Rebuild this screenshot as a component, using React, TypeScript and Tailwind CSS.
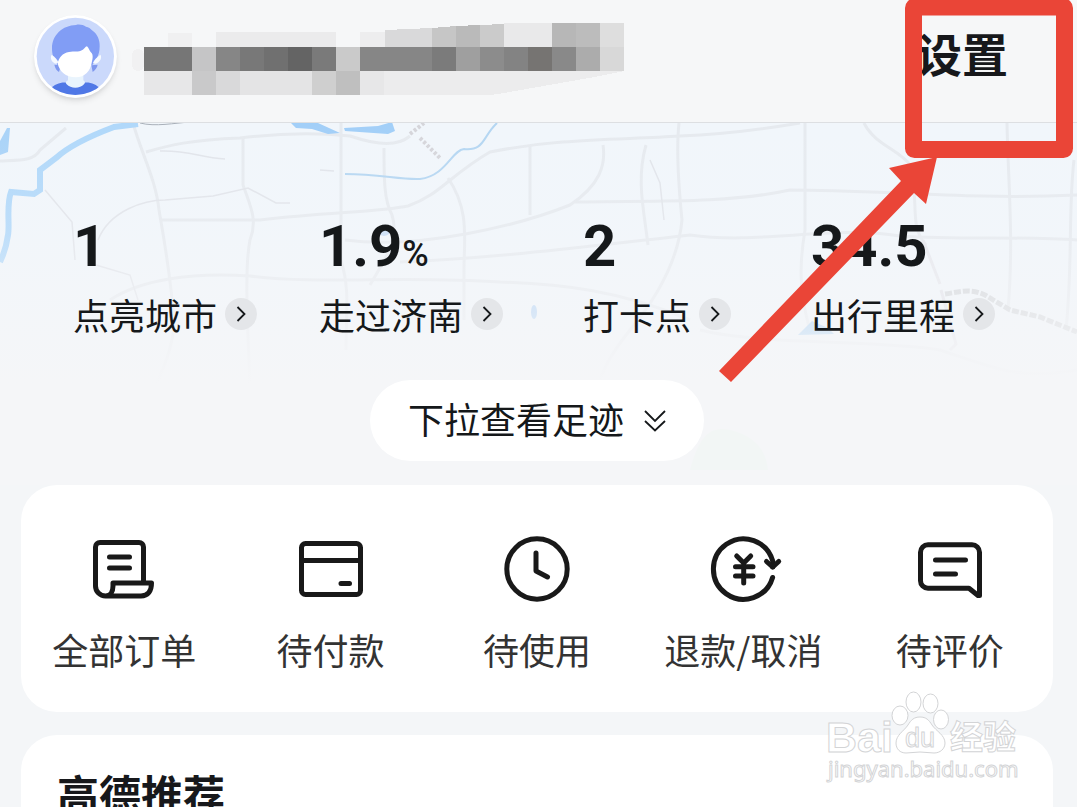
import type { ReactNode } from "react";

interface Stat {
  value: string;
  unit?: string;
  label: string;
}

const stats: Stat[] = [
  { value: "1", label: "点亮城市" },
  { value: "1.9", unit: "%", label: "走过济南" },
  { value: "2", label: "打卡点" },
  { value: "34.5", label: "出行里程" },
];

interface Order {
  label: string;
  icon: ReactNode;
}

const orders: Order[] = [
  {
    label: "全部订单",
    icon: (
      <>
        <path d="M55.500 49.500V14a4.500 4.500 0 0 0-4.500-4.500H12A4.500 4.500 0 0 0 7.500 14v39a10 10 0 0 0 10 10H53c7 0 10.500-5 10.500-13H25v3c0 6-3 10-7.500 10" />
        <path d="M21.500 24h20M21.500 35h20" />
      </>
    ),
  },
  {
    label: "待付款",
    icon: (
      <>
        <rect x="6.500" y="10.500" width="59" height="51" rx="4" />
        <path d="M6.500 27.500h59M46 50.500h8.500" />
      </>
    ),
  },
  {
    label: "待使用",
    icon: (
      <>
        <circle cx="36" cy="36" r="30.200" />
        <path d="M35 20v18l11.500 6" />
      </>
    ),
  },
  {
    label: "退款/取消",
    icon: (
      <>
        <path d="M65.600 44.500A30.200 30.200 0 1 1 65.700 28v6" />
        <path d="M59.500 28.500l6.200 5.500 6-5.500" />
        <path d="M29.700 23l7 7 7-7M36.700 30v20M28.500 33.700h17.500M28.500 43h17.500" />
      </>
    ),
  },
  {
    label: "待评价",
    icon: (
      <>
        <path d="M14 11.700h44a7.500 7.500 0 0 1 7.500 7.500v43.300h-1.500l-9-7.200H14a7.500 7.500 0 0 1-7.500-7.500V19.200a7.500 7.500 0 0 1 7.500-7.500z" />
        <path d="M21.500 27h30M21.500 41h20" />
      </>
    ),
  },
];

// [x, y, width, height, colour]
const mosaic: [number, number, number, number, string][] = [
  [168, 34, 24, 14, "#f0f0f1"],
  [216, 33, 120, 15, "#ebebec"],
  [360, 33, 25, 15, "#ededee"],
  [504, 24, 48, 24, "#e9e9ea"],
  [552, 24, 24, 24, "#b7b7b7"],
  [576, 24, 24, 24, "#bcbcbc"],
  [600, 24, 24, 24, "#dedede"],
  [144, 48, 48, 24, "#767676"],
  [192, 48, 24, 24, "#c5c5c6"],
  [216, 48, 24, 24, "#868686"],
  [240, 48, 24, 24, "#787878"],
  [264, 48, 24, 24, "#707070"],
  [288, 48, 24, 24, "#646464"],
  [312, 48, 24, 24, "#7a7a7a"],
  [336, 48, 24, 24, "#cacaca"],
  [360, 48, 72, 24, "#868686"],
  [432, 48, 24, 24, "#7b7b7b"],
  [456, 48, 24, 24, "#9f9f9f"],
  [480, 48, 24, 24, "#8c8c8c"],
  [504, 48, 24, 24, "#838383"],
  [528, 48, 24, 24, "#767472"],
  [552, 48, 24, 24, "#898989"],
  [576, 48, 24, 24, "#acacac"],
  [600, 48, 24, 24, "#d8d8d8"],
  [144, 72, 48, 24, "#e7e7e8"],
  [192, 72, 24, 24, "#c9c9ca"],
  [216, 72, 24, 24, "#d9d9da"],
  [240, 72, 72, 24, "#e4e4e5"],
  [312, 72, 24, 24, "#cfcfcf"],
  [336, 72, 24, 24, "#bfbfbf"],
  [360, 72, 24, 24, "#e7e7e8"],
];

function Avatar() {
  return (
    <svg viewBox="41 15 249 249" className="size-[83px] rounded-full shadow-md" aria-hidden="true">
      <defs>
        <clipPath id="face">
          <circle cx="165" cy="139" r="116" />
        </clipPath>
      </defs>
      <circle cx="165" cy="139" r="124" fill="#ffffff" />
      <g clipPath="url(#face)">
        <rect x="41" y="15" width="249" height="249" fill="#cbd9fb" />
        <path d="M90 236C102 224 120 216 138 218H192C212 216 228 224 240 236V264H90z" fill="#5078e6" />
        <path d="M143 185h46v26c6 4 6 8 2 12-12 14-40 14-52 0-4-4-4-8 4-12z" fill="#e9f4fd" />
        <path d="M102 164c2 10 7 18 14 22l6-20zM232 164c-2 9-7 16-15 22l-4-20z" fill="#7f98ee" />
        <path d="M167 45c10-3 22 0 30 5 8 1 14 6 18 11 16 10 24 30 23 48 0 14-3 26-9 36l-13 20H112c-12-14-17-30-17-50 0-40 32-69 72-70z" fill="#819df5" />
        <path d="M94 134c-6 8 0 26 15 27l5-4c-2-8-10-16-20-23zM240 134c6 8 0 22-14 27l-8-2c2-8 12-18 22-25z" fill="#f6faff" />
        <path d="M112 160c4-18 14-30 34-34 16-3 28 1 40-6 8-4 8-10 14-11 6 6 7 14 13 19 6 6 4 18 2 26-4 30-22 48-48 48-32 0-50-18-55-42z" fill="#ffffff" />
      </g>
    </svg>
  );
}

function MaskedName() {
  return (
    <svg viewBox="130 16 500 83" className="h-[83px] w-[500px] shrink-0" shapeRendering="crispEdges" aria-hidden="true">
      <rect x="132" y="50" width="12" height="22" rx="6" fill="#f1f1f2" />
      <path d="M385 31L432 29V48H385z" fill="#d9d9da" />
      <path d="M432 29L456 27V48H432z" fill="#c6c6c6" />
      <path d="M456 27L480 26V48H456z" fill="#bababa" />
      <path d="M480 26L504 25V48H480z" fill="#cbcbcb" />
      <path d="M384 72H624L600 77 504 94 490 96H384z" fill="#ececed" />
      {mosaic.map(([x, y, width, height, fill]) => (
        <rect key={`${x}-${y}`} x={x} y={y} width={width} height={height} fill={fill} />
      ))}
    </svg>
  );
}

function MapBackground() {
  return (
    <svg
      viewBox="0 123 1077 362"
      preserveAspectRatio="xMidYMin slice"
      className="absolute inset-0 size-full"
      fill="none"
      aria-hidden="true"
    >
      <defs>
        <linearGradient id="fade" x1="0" y1="0" x2="0" y2="1">
          <stop offset="0" stopColor="#f5f6f8" stopOpacity="0" />
          <stop offset="0.300" stopColor="#f5f6f8" stopOpacity="0.200" />
          <stop offset="0.720" stopColor="#f5f6f8" stopOpacity="1" />
        </linearGradient>
      </defs>
      <rect y="123" width="1077" height="362" fill="#f1f6fb" />

      {/* roads */}
      <g stroke="#e6eaef" strokeWidth="3">
        <path d="M133 123C142 155 156 180 159 210C164 240 170 270 174 320C174 350 160 375 145 410" />
        <path d="M146 152C170 145 190 140 240 138C290 132 330 134 350 136C380 146 398 146 410 136" />
        <path d="M243 138V185C250 205 258 220 250 240C244 270 248 330 250 390" />
        <path d="M341 123V260C350 290 346 310 346 350" />
        <path d="M160 220H260C330 212 380 212 408 206C440 195 450 175 490 152C560 138 620 140 680 136C730 134 770 128 800 123" />
        <path d="M110 300C140 280 190 272 250 276C320 285 400 275 500 282C560 284 620 290 690 320" />
        <path d="M679 123C676 150 680 200 682 220C678 262 655 300 630 330C618 345 600 370 598 390" />
        <path d="M384 148C384 180 384 200 392 215C400 240 384 260 370 285" />
        <path d="M448 178C470 210 464 240 464 270V320" />
        <path d="M530 146V215M345 240C420 250 520 225 570 205C600 185 606 165 603 145" />
        <path d="M575 202C640 200 720 205 790 190C880 190 970 200 1077 195" />
        <path d="M400 262C500 258 600 245 690 235C760 245 830 225 900 236C960 240 1020 236 1077 240" />
        <path d="M646 145C636 180 644 210 648 245" />
        <path d="M805 123V230C800 260 798 290 810 330" />
        <path d="M864 123C875 145 900 150 910 165C920 200 908 225 926 245" />
        <path d="M1007 123C1008 180 1014 240 1008 310M1074 160C1068 210 1073 260 1066 330" />
        <path d="M700 330C760 345 880 340 940 350C1000 370 1020 380 1077 370" />
        <path d="M0 161C20 160 34 161 40 150L66 128" />
      </g>
      <g stroke="#e1e4ea" strokeWidth="1.500">
        <path d="M45 190L72 222L75 260M98 240C110 210 145 200 165 200L213 196L248 188L276 203H290" />
        <path d="M160 151C190 150 200 158 225 159M96 265L130 275L138 300M320 170L334 171" />
        <path d="M650 160L660 183L664 220" />
      </g>
      <path d="M140 123C155 127 175 123 190 122" stroke="#a9b0b9" />

      {/* railway */}
      <path d="M923 240L940 284" stroke="#e5e6ec" strokeWidth="3" />
      <path
        d="M945 294C960 292 970 288 985 295L1010 310L1040 317L1077 332"
        stroke="#cfd2d6"
        strokeWidth="5"
        strokeDasharray="7 2"
      />
      <path d="M941 290L956 344L950 350" stroke="#e0e0e8" strokeWidth="3" />
      <path d="M410 134L424 123M420 138L440 158" stroke="#d5d5da" strokeWidth="4" strokeDasharray="3 2" />

      {/* rivers and lakes */}
      <path d="M138 124L114 127C90 136 70 145 56 158L40 170V190L34 194L11 192C6 205 10 225 8 235C6 250 3 255 0 262" stroke="#b0d8fa" strokeWidth="6" />
      <path d="M0 141L7 128H10L8 152L0 155z" fill="#a9d3f8" />
      <path d="M291 123H318L340 133L328 134L312 129L296 128zM344 128L378 126L392 122L395 131L388 134L345 131z" fill="#a2cff8" />
      <path d="M345 174C380 174 400 180 420 179C446 176 452 150 464 149C485 151 482 137 497 123" stroke="#b4d6f2" strokeWidth="2" />
      <ellipse cx="384" cy="231" rx="6" ry="5" fill="#c6dcf5" />
      <ellipse cx="534" cy="312" rx="3" ry="7" fill="#a8cdf5" />
      <path d="M798 335L812 321L828 328L834 334z" fill="#98c8f2" />

      <rect y="123" width="1077" height="362" fill="url(#fade)" />
      <path d="M690 470C698 440 708 425 730 430C755 436 766 450 768 470z" fill="#f2f6f5" />
    </svg>
  );
}

function StatItem({ stat }: { stat: Stat }) {
  return (
    <a href="#" className="flex flex-col text-[#15181a]">
      <span className="font-[Roboto,sans-serif] text-[58px] leading-[60px] font-bold">
        {stat.value}
        {stat.unit && <span className="text-[36px] leading-none font-medium">{stat.unit}</span>}
      </span>
      <span className="mt-3 flex items-center gap-2">
        <span className="text-[36px] leading-[52px]">{stat.label}</span>
        <span className="flex size-8 items-center justify-center rounded-full bg-[#e4e6e9]">
          <svg viewBox="0 0 10 16" className="h-4 w-2.5" fill="none" stroke="currentColor" strokeWidth="1.800">
            <path d="M1.500 1l7 7-7 7" />
          </svg>
        </span>
      </span>
    </a>
  );
}

function Annotation() {
  return (
    <svg viewBox="710 0 367 390" className="pointer-events-none absolute top-0 right-0 h-[390px] w-[367px]" aria-hidden="true">
      <rect x="913.500" y="7" width="151" height="142.500" rx="1" fill="none" stroke="#ea4537" strokeWidth="17" strokeLinejoin="round" />
      <path d="M719 371L901 181L889 168L937 157L926 204L914 193L731 382z" fill="#ea4537" />
    </svg>
  );
}

function Watermark() {
  return (
    <svg
      viewBox="800 687 277 120"
      className="pointer-events-none absolute right-0 bottom-0 h-[120px] w-[277px]"
      fill="#ffffff"
      stroke="#d3d4d6"
      strokeWidth="1"
      aria-hidden="true"
    >
      <text x="826" y="752" className="font-['Liberation_Sans',sans-serif] text-[43px] font-bold">Bai</text>
      <ellipse cx="913.500" cy="702" rx="7.500" ry="10" />
      <ellipse cx="930.500" cy="703.500" rx="7.500" ry="9.500" />
      <ellipse cx="900" cy="715.500" rx="8" ry="9.500" />
      <ellipse cx="941" cy="719.500" rx="7.500" ry="9.500" />
      <path d="M920 717c6 0 9 3 12 8 4 6 13 10 13 18 0 6-5 10-11 10-5 0-9-1-14-1s-9 1-14 1c-6 0-10-4-10-10 0-8 8-12 12-18 3-5 6-8 12-8z" />
      <text x="905" y="747" className="font-['Liberation_Sans',sans-serif] text-[27px]">du</text>
      <text x="950" y="749" className="text-[33px] font-bold">经验</text>
      <text x="828" y="777" className="font-['Noto_Sans',sans-serif] text-[22px]">jingyan.baidu.com</text>
    </svg>
  );
}

export default function App() {
  return (
    <div className="relative h-screen overflow-hidden bg-[#f4f6f8] font-['Noto_Sans_CJK_SC',sans-serif]">
      <header className="flex items-start justify-between border-b border-[#dddfe2] bg-[#f6f7f8] pt-[15px] pr-[69px] pb-6 pl-[34px]">
        <div className="flex items-center gap-[13px]">
          <Avatar />
          <MaskedName />
        </div>
        <button className="text-[46px] leading-[74px] font-bold text-[#17181b]">设置</button>
      </header>

      <section className="relative pb-6">
        <MapBackground />
        <div className="relative grid grid-cols-4 justify-items-center pt-[93px] pr-[51px] pl-[42px]">
          {stats.map((stat) => (
            <StatItem key={stat.label} stat={stat} />
          ))}
        </div>
        <div className="relative mt-10 mr-6 ml-[21px] flex justify-center">
          <button className="flex h-[81px] items-center gap-5 rounded-full bg-white px-[38px] text-[#15181a]">
            <span className="pb-1.5 text-[36px] leading-[52px]">下拉查看足迹</span>
            <svg viewBox="0 0 22 22" className="size-[22px]" fill="none" stroke="currentColor" strokeWidth="1.800">
              <path d="M1 1l10 10L21 1M1 11l10 9.500L21 11" />
            </svg>
          </button>
        </div>
      </section>

      <main className="mr-6 ml-[21px] flex flex-col gap-[23px]">
        <nav className="grid grid-cols-5 rounded-[36px] bg-white pt-12 pb-[37px]">
          {orders.map((order) => (
            <a key={order.label} href="#" className="flex flex-col items-center gap-[18px] text-[#333333]">
              <svg
                viewBox="0 0 72 72"
                className="size-[72px] overflow-visible"
                fill="none"
                stroke="#191919"
                strokeWidth="5"
                strokeLinecap="round"
                strokeLinejoin="round"
                aria-hidden="true"
              >
                {order.icon}
              </svg>
              <span className="text-[36px] leading-[52px]">{order.label}</span>
            </a>
          ))}
        </nav>

        <section className="rounded-[36px] bg-white px-9 pt-7 pb-10">
          <h2 className="text-[42px] leading-[60px] font-bold text-[#17181b]">高德推荐</h2>
        </section>
      </main>

      <Annotation />
      <Watermark />
    </div>
  );
}
